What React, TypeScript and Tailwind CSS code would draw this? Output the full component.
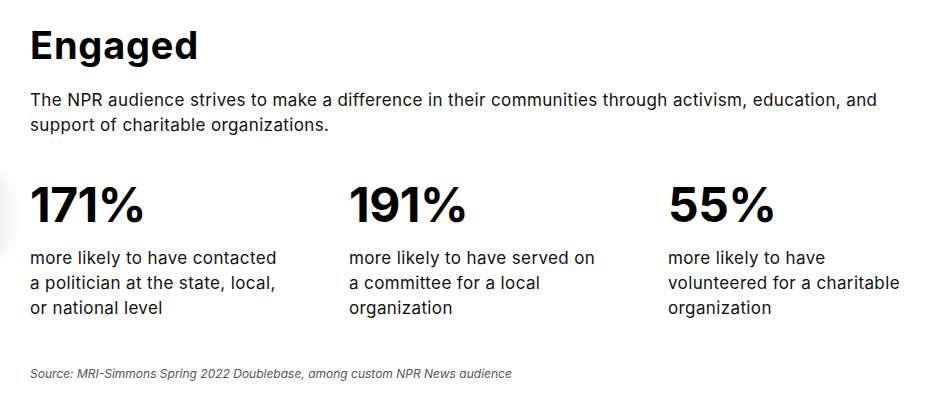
const stats = [
  {
    value: "171%",
    lines: ["more likely to have contacted", "a politician at the state, local,", "or national level"],
  },
  {
    value: "191%",
    lines: ["more likely to have served on", "a committee for a local", "organization"],
  },
  {
    value: "55%",
    lines: ["more likely to have", "volunteered for a charitable", "organization"],
  },
];

function Stat({ value, lines }: { value: string; lines: string[] }) {
  return (
    <div className="w-[319px] shrink-0">
      <div className="text-[48px] font-bold leading-[56px] tracking-[-0.5px] text-black">{value}</div>
      <div className="mt-[13px] text-[17px] leading-[25px] tracking-[0.38px] text-[#111]">
        {lines.map((l) => (
          <div key={l} className="whitespace-nowrap">{l}</div>
        ))}
      </div>
    </div>
  );
}

export default function App() {
  return (
    <div className="relative h-[404px] w-[931px] overflow-hidden bg-white font-['Inter',sans-serif]">
      <div className="pointer-events-none absolute left-[-30px] top-[170px] h-[90px] w-[40px] rounded-full bg-[#f3f3f3] blur-[6px]" />
      <div className="relative px-[30px] pt-[22px]">
        <h1 className="text-[38px] font-bold leading-[46px] tracking-[0.8px] text-black">Engaged</h1>
        <p className="mt-[20px] text-[17px] leading-[25px] tracking-[0.37px] text-[#111]">
          The NPR audience strives to make a difference in their communities through activism, education, and
          <br />
          support of charitable organizations.
        </p>
        <div className="mt-[39px] flex">
          {stats.map((s) => (
            <Stat key={s.value} value={s.value} lines={s.lines} />
          ))}
        </div>
        <p className="mt-[45px] text-[12px] italic leading-[16px] text-[#555]">
          Source: MRI-Simmons Spring 2022 Doublebase, among custom NPR News audience
        </p>
      </div>
    </div>
  );
}
